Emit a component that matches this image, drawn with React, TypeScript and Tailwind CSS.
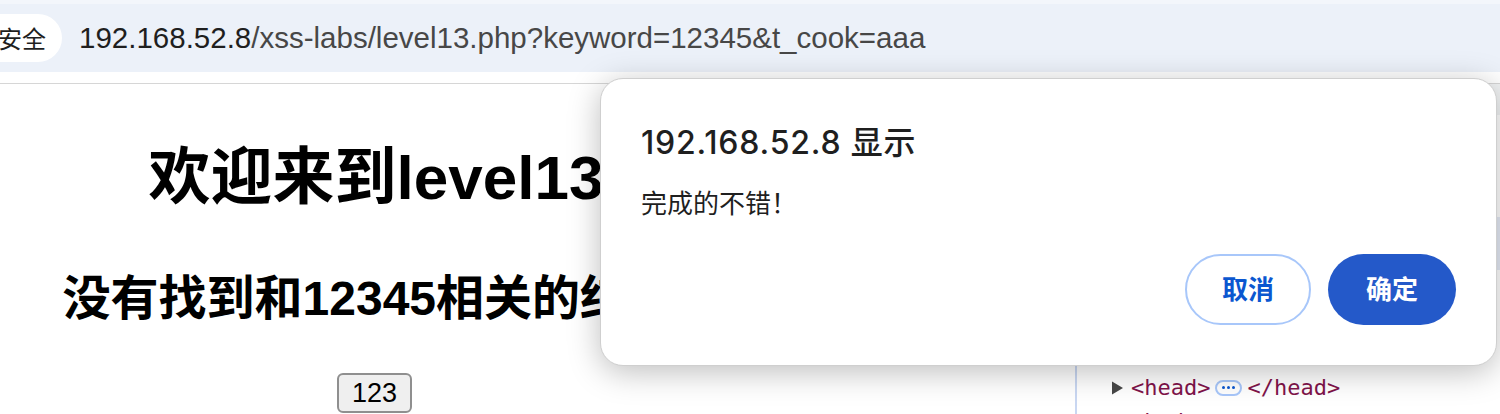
import React from "react";

function AddressBar() {
  return (
    <div className="h-[72px] border-t-4 border-[#f3f6fb] bg-[#ecf1f9] flex items-center">
      <div className="-ml-[40px] pl-[38px] pr-[16px] h-[48px] rounded-full bg-white flex items-center text-[24px] text-[#1f1f1f] font-['Noto_Sans_CJK_SC',sans-serif]">
        安全
      </div>
      <div className="ml-[17px] text-[29.5px] leading-[36px] font-['Liberation_Sans',sans-serif] whitespace-nowrap">
        <span className="text-[#1f1f1f]">192.168.52.8</span>
        <span className="text-[#474747]">/xss-labs/level13.php?keyword=12345&t_cook=aaa</span>
      </div>
    </div>
  );
}

function PageContent() {
  return (
    <div className="w-[1075px] shrink-0">
      <div className="w-[752px] flex flex-col items-center text-black font-['Liberation_Sans','Noto_Sans_CJK_SC',sans-serif]">
        <h1 className="mt-[63px] text-[62px] leading-[62px] font-bold whitespace-nowrap">欢迎来到level13</h1>
        <h2 className="mt-[66px] text-[48px] leading-[48px] font-bold whitespace-nowrap">没有找到和12345相关的结果.</h2>
        <button className="mt-[50px] ml-[-3px] px-[13px] py-[3px] border-2 border-[#8f8f8f] rounded-[6px] bg-[#efefef] text-[27px] leading-[30px] text-black">
          123
        </button>
      </div>
    </div>
  );
}

function DevTools() {
  return (
    <div className="flex-1 border-l-2 border-[#c9d7f2] bg-white">
      <div className="h-[31px] bg-[#f1f3f4]" />
      <div className="h-[102px]" />
      <div className="h-[53px] bg-[#e5ebf6]" />
      <div className="h-[103px]" />
      <div className="font-['DejaVu_Sans_Mono',monospace] text-[22px] leading-[29px]">
        <div className="flex items-center pl-[35px]">
          <svg width="19" height="14" viewBox="0 0 19 14" className="shrink-0">
            <path d="M0 0.5 L11 7 L0 13.5 Z" fill="#474747" />
          </svg>
          <span className="text-[#80134a]">&lt;head&gt;</span>
          <span className="mx-[5px] w-[27px] h-[16px] rounded-full border-2 border-[#a8c7fa] flex items-center justify-center gap-[2px]">
            <span className="w-[3px] h-[3px] rounded-full bg-[#0b57d0]" />
            <span className="w-[3px] h-[3px] rounded-full bg-[#0b57d0]" />
            <span className="w-[3px] h-[3px] rounded-full bg-[#0b57d0]" />
          </span>
          <span className="text-[#80134a]">&lt;/head&gt;</span>
        </div>
        <div className="mt-[5px] flex items-center pl-[33px]">
          <svg width="21" height="12" viewBox="0 0 21 12" className="shrink-0">
            <path d="M0 0 L13 0 L6.5 11 Z" fill="#474747" />
          </svg>
          <span className="text-[#80134a]">&lt;body&gt;</span>
        </div>
      </div>
    </div>
  );
}

function AlertDialog() {
  return (
    <div className="absolute left-[600px] top-[78px] w-[897px] h-[288px] rounded-[23px] bg-white border border-[#cfcfcf] shadow-[0_6px_32px_rgba(0,0,0,0.26)] flex flex-col pt-[45px] px-[40px] pb-[40px] font-['Inter','Noto_Sans_CJK_SC',sans-serif]">
      <div className="text-[32px] leading-[37px] tracking-[0.8px] text-[#1f1f1f] font-medium whitespace-nowrap">192.168.52.8 显示</div>
      <div className="mt-[27px] text-[26px] leading-[32px] text-[#1f1f1f]">完成的不错！</div>
      <div className="mt-[34px] flex justify-end gap-[17px]">
        <button className="w-[126px] h-[71px] rounded-full border-2 border-[#a8c7fa] bg-white text-[#0b57d0] text-[26px] font-bold">
          取消
        </button>
        <button className="w-[128px] h-[71px] rounded-full bg-[#2459c9] text-white text-[26px] font-bold">
          确定
        </button>
      </div>
    </div>
  );
}

export default function App() {
  return (
    <div className="relative w-[1500px] h-[414px] overflow-hidden bg-white">
      <AddressBar />
      <div className="h-[12px] bg-white border-b border-[#d6d6d6]" />
      <div className="flex h-[330px]">
        <PageContent />
        <DevTools />
      </div>
      <AlertDialog />
    </div>
  );
}
